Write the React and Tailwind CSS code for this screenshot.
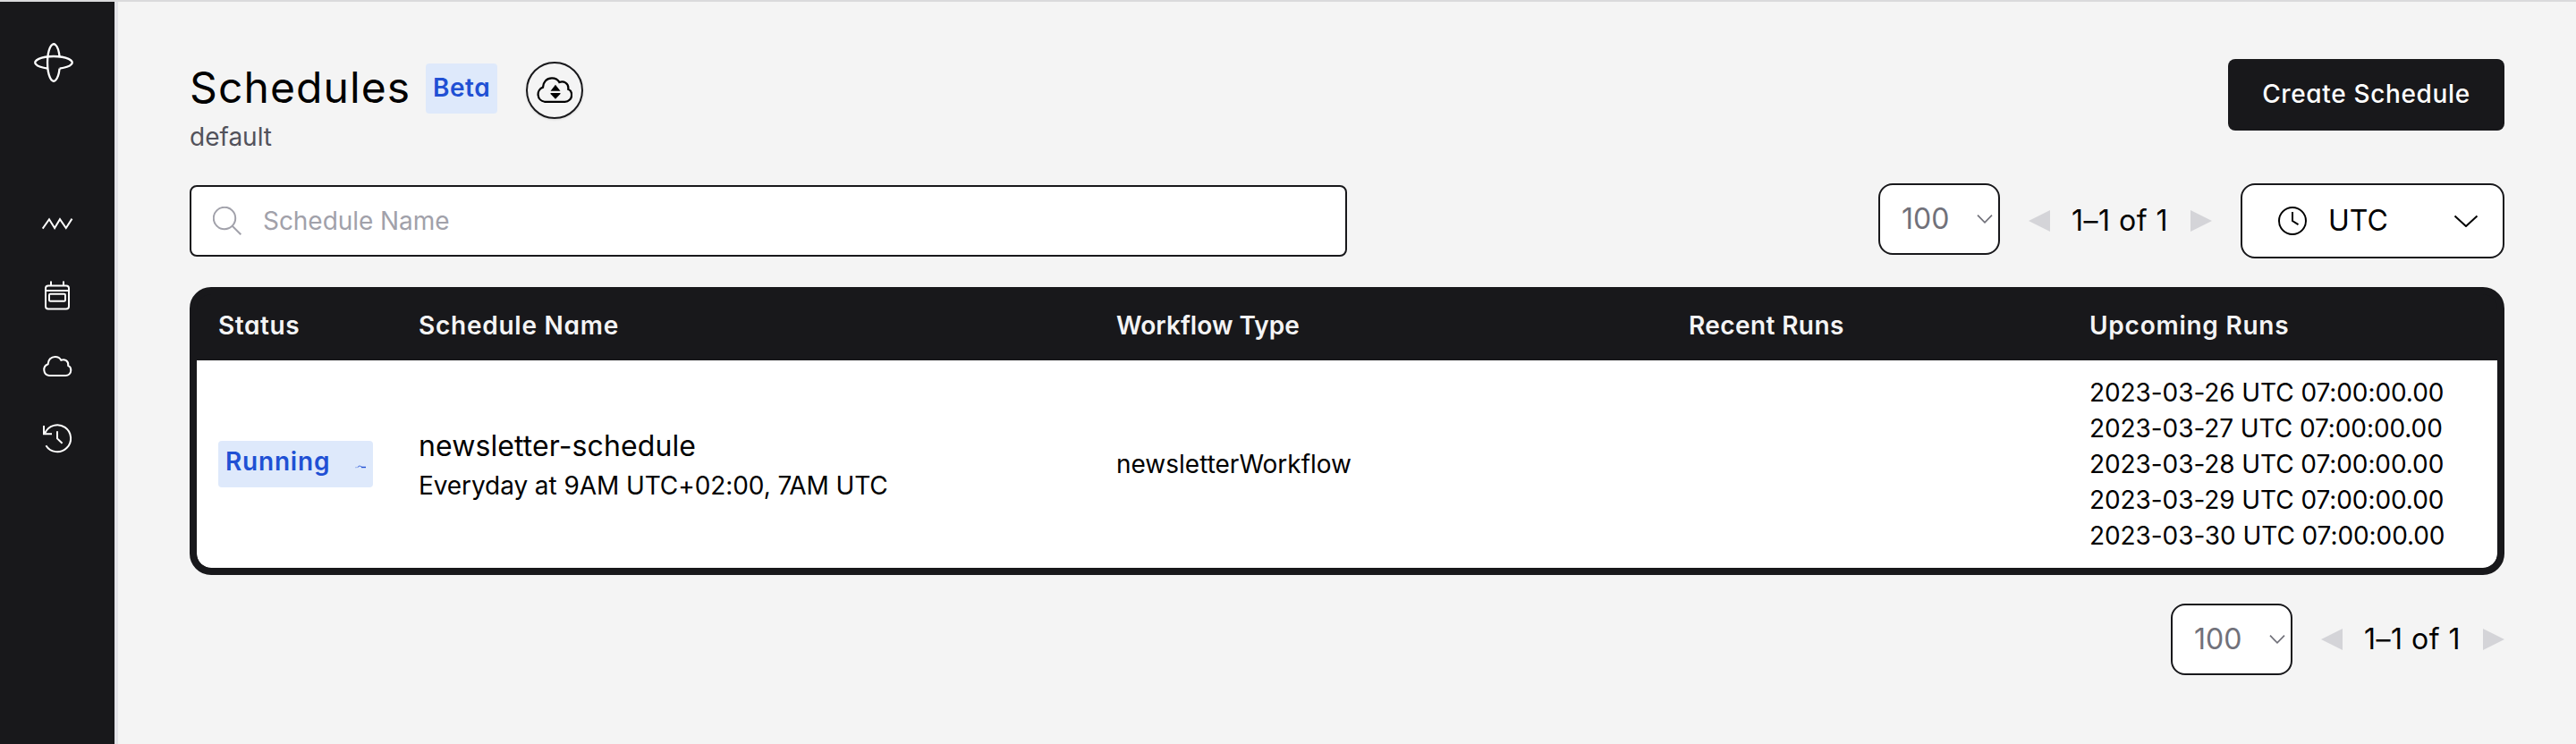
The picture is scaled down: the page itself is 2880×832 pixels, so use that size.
const CLOUD =
  "M7 22.2 A6.7 6.7 0 0 1 5.6 9.3 C5.8 4.5 9 1 13.6 1 C16.6 1 19 2.4 20.3 4.8 C24 3.4 29 5.4 28.2 11 C30.5 12 31.3 14 31.3 16.2 A6 6 0 0 1 25.3 22.2 Z";

const COLUMNS = "grid grid-cols-[224px_780px_640px_448px_1fr] pl-6";

const RUNS = [
  "2023-03-26 UTC 07:00:00.00",
  "2023-03-27 UTC 07:00:00.00",
  "2023-03-28 UTC 07:00:00.00",
  "2023-03-29 UTC 07:00:00.00",
  "2023-03-30 UTC 07:00:00.00",
];

function NavIcon({ children }) {
  return (
    <a className="block size-12">
      <svg
        className="size-12"
        viewBox="0 0 48 48"
        fill="none"
        stroke="currentColor"
        strokeWidth="2"
      >
        {children}
      </svg>
    </a>
  );
}

function Sidebar() {
  return (
    <aside className="flex w-[132px] shrink-0 flex-col border-r-4 border-[#e3e3e8] bg-[#18181b] pt-[46px] text-white">
      <svg
        className="ml-[38px] size-11"
        viewBox="-22 -22 44 44"
        fill="none"
        stroke="currentColor"
        strokeWidth="2.3"
      >
        <path d="M-6.6 6.55 A20.7 6.95 0 1 1 6.6 6.55" />
        <path d="M6.6 6.55 A6.95 20.7 0 1 1 6.6 -6.55" />
      </svg>
      <nav className="mt-[134px] flex flex-col gap-8 pl-10">
        <NavIcon>
          <path d="M7.7 29.6 15 19.2 21.1 29 27 19.2 33.8 29 40.5 18.6" />
        </NavIcon>
        <NavIcon>
          <rect x="11" y="13.4" width="26" height="26" rx="3" />
          <path d="M17 8.4v5M31 8.4v5M11 19h26" />
          <rect x="15" y="22.8" width="18" height="8" rx="1.2" />
        </NavIcon>
        <NavIcon>
          <path d={CLOUD} transform="translate(8 11.9)" />
        </NavIcon>
        <NavIcon>
          <path d="M10.3 18.4 A15 15 0 1 1 11.4 32.2" />
          <path d="M9 10v9.2h9" />
          <path d="M24 16.2v8.2l5.6 5.3" />
        </NavIcon>
      </nav>
    </aside>
  );
}

function PageSize({ className = "" }) {
  return (
    <div
      className={
        "flex h-20 w-[136px] shrink-0 items-center justify-between rounded-2xl border-2 border-[#18181b] bg-white pr-[6px] pl-6 text-[32px] leading-[40px] text-[#71717a] " +
        className
      }
    >
      <span>100</span>
      <svg
        className="h-3 w-[18px]"
        viewBox="0 0 18 12"
        fill="none"
        stroke="currentColor"
        strokeWidth="1.7"
      >
        <path d="M1 1.7 9 9.9 17 1.7" />
      </svg>
    </div>
  );
}

function Pager() {
  return (
    <div className="flex items-center gap-6">
      <svg className="size-6" viewBox="0 0 24 24" fill="#d4d4d8">
        <path d="M0 12 24 0V24Z" />
      </svg>
      <span className="w-[109px] text-[32px] leading-[40px] tracking-[0.5px] whitespace-nowrap">
        1–1 of 1
      </span>
      <svg className="size-6" viewBox="0 0 24 24" fill="#d4d4d8">
        <path d="M24 12 0 0V24Z" />
      </svg>
    </div>
  );
}

function PageHeader() {
  return (
    <header className="flex items-start justify-between [font-feature-settings:'cv11'] [font-variation-settings:'opsz'_14]">
      <div className="flex h-[67px] items-start">
        <h1 className="w-[264px] text-[48px] leading-[64px] font-[430] tracking-[1.1px]">
          Schedules
        </h1>
        <span className="mt-[5px] flex h-14 w-20 items-center rounded-[4px] bg-[#dee9fb] pb-[2px] pl-2 text-[28px] font-[560] tracking-[0.5px] text-[#2050d4]">
          Beta
        </span>
        <span className="mt-[3px] ml-8 flex size-16 items-center justify-center rounded-full border-2 border-[#18181b] shadow-sm">
          <svg className="h-[30px] w-10" viewBox="0 0 32 24">
            <path d={CLOUD} fill="none" stroke="#000" strokeWidth="1.8" />
            <path d="M16.8 7 21.2 12.5H12.4ZM12.4 14.4H21.2V15.2L16.8 19.7 12.4 15.2Z" />
          </svg>
        </span>
      </div>
      <button className="flex h-20 w-[309px] items-center justify-center rounded-lg bg-[#18181b] pb-[2px] text-[28px] font-[450] tracking-[0.65px] text-white">
        Create Schedule
      </button>
    </header>
  );
}

function Toolbar() {
  return (
    <div className="mt-8 flex h-[84px] items-center">
      <div className="flex h-20 w-[1294px] items-center rounded-lg border-2 border-[#18181b] bg-white pl-6 text-[28px] text-[#a1a1aa]">
        <svg
          className="size-8"
          viewBox="0 0 32 32"
          fill="none"
          stroke="currentColor"
          strokeWidth="2"
        >
          <circle cx="13" cy="13" r="12.2" />
          <path d="M21.5 21.5 31.3 31.3" />
        </svg>
        <span className="ml-6 tracking-[-0.05px]">Schedule Name</span>
      </div>
      <PageSize className="ml-auto self-start" />
      <div className="mx-8">
        <Pager />
      </div>
      <div className="flex h-[84px] w-[295px] items-center rounded-2xl border-2 border-[#18181b] bg-white pr-[27px] pl-10 text-[32px] leading-[40px]">
        <svg
          className="size-8"
          viewBox="0 0 32 32"
          fill="none"
          stroke="currentColor"
          strokeWidth="2"
        >
          <circle cx="16" cy="16" r="15" />
          <path d="M16 6v10l6.5 4.2" />
        </svg>
        <span className="ml-6">UTC</span>
        <svg
          className="ml-auto h-[14px] w-7"
          viewBox="0 0 28 14"
          fill="none"
          stroke="currentColor"
          strokeWidth="2"
        >
          <path d="M1.5 1.5 14 13 26.5 1.5" />
        </svg>
      </div>
    </div>
  );
}

function ScheduleTable() {
  return (
    <section className="mt-8 h-[322px] overflow-hidden rounded-[24px] border-8 border-[#18181b] bg-[#18181b] text-[28px] leading-[40px]">
      <div
        className={
          COLUMNS +
          " h-[74px] items-center pb-1 font-[560] text-[#f4f4f5] [font-feature-settings:'cv11'] [font-variation-settings:'opsz'_14]"
        }
      >
        <span className="tracking-[0.6px]">Status</span>
        <span className="tracking-[0.75px]">Schedule Name</span>
        <span className="tracking-[0.05px]">Workflow Type</span>
        <span className="tracking-[0.4px]">Recent Runs</span>
        <span className="tracking-[0.75px]">Upcoming Runs</span>
      </div>
      <div className={COLUMNS + " h-[232px] items-center rounded-b-2xl bg-white"}>
        <span className="flex h-[52px] w-[173px] items-center justify-between rounded-[4px] bg-[#dee9fb] pr-2 pb-[6px] pl-2 font-[560] tracking-[0.8px] text-[#2050d4] [font-feature-settings:'cv11'] [font-variation-settings:'opsz'_14]">
          Running
          <svg
            className="mt-[11px] h-1 w-3"
            viewBox="0 0 12 4"
            fill="none"
            stroke="currentColor"
          >
            <path d="M0 2.8 3.5 2.5" opacity=".35" />
            <path d="M3 2.2 5 0.9 8 2.5" opacity=".8" />
            <path d="M7 2.5H12" strokeWidth="1.4" />
          </svg>
        </span>
        <div>
          <div className="text-[32px] leading-[48px] tracking-[0.1px]">
            newsletter-schedule
          </div>
          <div className="tracking-[-0.08px]">
            Everyday at 9AM UTC+02:00, 7AM UTC
          </div>
        </div>
        <span>newsletterWorkflow</span>
        <span />
        <div className="tracking-[-0.08px]">
          {RUNS.map((run) => (
            <div key={run}>{run}</div>
          ))}
        </div>
      </div>
    </section>
  );
}

export default function App() {
  return (
    <div className="flex h-[832px] w-[2880px] flex-col overflow-hidden border-t-2 border-[#dadadc] bg-[#f4f4f4] font-[Inter,sans-serif] text-black">
      <div className="flex flex-1">
        <Sidebar />
        <main className="flex-1 px-20 pt-16">
          <div className="h-[107px]">
            <PageHeader />
            <p className="-mt-[13px] text-[28px] leading-[40px] text-[#52525b]">
              default
            </p>
          </div>
          <Toolbar />
          <ScheduleTable />
          <div className="mt-8 flex items-center justify-end gap-8">
            <PageSize />
            <Pager />
          </div>
        </main>
      </div>
    </div>
  );
}
